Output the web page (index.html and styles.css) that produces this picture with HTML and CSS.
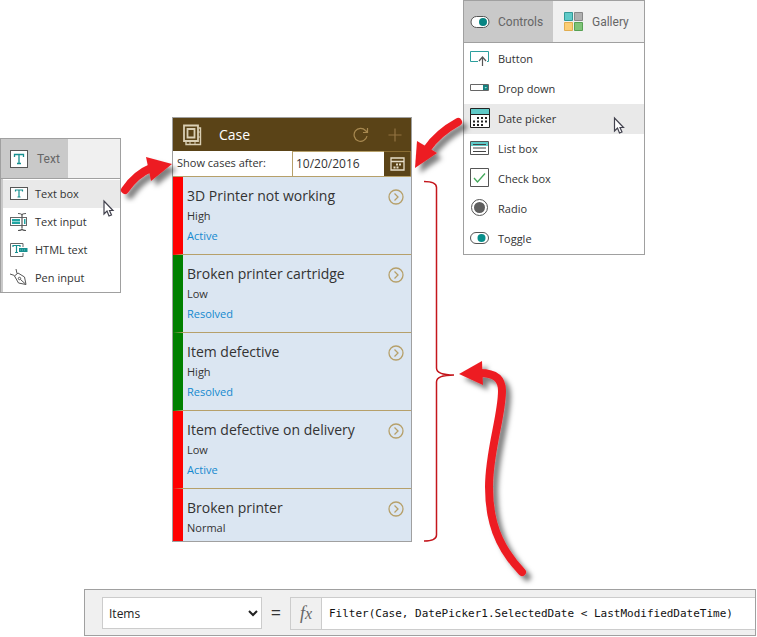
FILE: index.html
```html
<!DOCTYPE html>
<html lang="en">
<head>
<meta charset="utf-8">
<title>Filter cases by date</title>
<link rel="stylesheet" href="styles.css">
</head>
<body>
<main class="diagram">
  <div class="stage">
    <section class="panel text-panel" aria-label="Text controls">
      <div class="tabs">
        <button class="tab selected" type="button">
          <svg width="20" height="20" viewBox="0 0 20 20"><rect x="1.500" y="1.500" width="17" height="17" fill="#fff" stroke="#555"/><path d="M5.500 8V5.500h9V8M10 5.500v9M8 14.500h4" fill="none" stroke="#168f8f" stroke-width="1.300"/></svg>
          Text
        </button>
      </div>
      <div class="menu">
        <button class="item active" type="button">
          <svg width="20" height="20" viewBox="0 0 20 20"><rect x="1.500" y="3.500" width="17" height="12" fill="#fff" stroke="#555"/><path d="M6.500 7.500V6h7v1.500M10 6v7M8.500 13h3" fill="none" stroke="#168f8f" stroke-width="1.200"/></svg>
          Text box
        </button>
        <button class="item" type="button">
          <svg width="20" height="20" viewBox="0 0 20 20"><rect x="1.500" y="5.500" width="16" height="8" fill="#fff" stroke="#666"/><path d="M3 7h8v5H3zM15 7h1.500v5H15z" fill="#21a5a3"/><path d="M3 9.500h8" stroke="#8ed6d3"/><path d="M9 1.500q4 0 4 2q0-2 4-2M13 3v13M9 18.500q4 0 4-2q0 2 4 2" fill="none" stroke="#555" stroke-width="1.200"/></svg>
          Text input
        </button>
        <button class="item" type="button">
          <svg width="20" height="20" viewBox="0 0 20 20"><path d="M14 7V3.500H1.500v13H14V13" fill="none" stroke="#666"/><path d="M4 7V5.500h7V7M7.500 5.500v7M6 12.500h3" fill="none" stroke="#168f8f" stroke-width="1.200"/><path d="M10 8h8.500v4H10z" fill="#168f8f"/><path d="M11 10h6" stroke="#65c6c1" stroke-dasharray="1 1"/></svg>
          HTML text
        </button>
        <button class="item" type="button">
          <svg width="20" height="20" viewBox="0 0 20 20" fill="none" stroke="#555"><path d="M1 6l4.500 1.500M7 1l1 4.500M5.500 8L9 5l6.500 4 1.500 7.500-7.500-1.500L5.500 8zM16.500 16l-5-4.500"/><circle cx="10.500" cy="10.500" r="1.200"/></svg>
          Pen input
        </button>
      </div>
    </section>

    <section class="phone" aria-label="Case app">
      <header class="app-bar">
        <svg width="20" height="22" viewBox="0 0 20 22" fill="none" stroke="#d9cfb4"><path d="M2 1.500h14v15.500H2zM5.500 5h7v8.500h-7z" stroke-width="1.800"/><path d="M4 18v2.500h14.500V4H17" stroke-width="1.400"/><path d="M18 8H16M18 13h-2M8 20v-2M13 20v-2"/></svg>
        <h1>Case</h1>
        <button type="button" aria-label="Refresh"><svg width="16" height="16" viewBox="0 0 16 16" fill="none" stroke="#a88950" stroke-width="1.200"><path d="M14 9A6.500 6.500 0 1 1 12.500 3.500L14 5M14.500 1v4.500H10"/></svg></button>
        <button type="button" aria-label="Add"><svg width="14" height="14" viewBox="0 0 14 14"><path d="M7 .5v13M.5 7h13" stroke="#927341" stroke-width="1.200"/></svg></button>
      </header>
      <div class="date-row">
        <label for="date">Show cases after:</label>
        <input id="date" type="text" value="10/20/2016">
        <button type="button" aria-label="Choose date"><svg width="15" height="14" viewBox="0 0 15 14" fill="none" stroke="#e6dec9"><path d="M1 1h13v12H1zM1 4.500h13" stroke-width="1.300"/><path d="M6 7.500h6M3.500 10.500h6" stroke-width="2" stroke-dasharray="2 1"/></svg></button>
      </div>
      <ul class="cases">
        <li class="case open">
          <div><h2>3D Printer not working</h2><p>High</p><p class="status">Active</p></div>
          <button type="button" aria-label="Open case"><svg width="16" height="16" viewBox="0 0 16 16" fill="none" stroke="#b6a06a"><circle cx="8" cy="8" r="7" stroke-width="1.300"/><path d="M6.500 4.500L10 8l-3.500 3.500" stroke-width="1.300"/></svg></button>
        </li>
        <li class="case resolved">
          <div><h2>Broken printer cartridge</h2><p>Low</p><p class="status">Resolved</p></div>
          <button type="button" aria-label="Open case"><svg width="16" height="16" viewBox="0 0 16 16" fill="none" stroke="#b6a06a"><circle cx="8" cy="8" r="7" stroke-width="1.300"/><path d="M6.500 4.500L10 8l-3.500 3.500" stroke-width="1.300"/></svg></button>
        </li>
        <li class="case resolved">
          <div><h2>Item defective</h2><p>High</p><p class="status">Resolved</p></div>
          <button type="button" aria-label="Open case"><svg width="16" height="16" viewBox="0 0 16 16" fill="none" stroke="#b6a06a"><circle cx="8" cy="8" r="7" stroke-width="1.300"/><path d="M6.500 4.500L10 8l-3.500 3.500" stroke-width="1.300"/></svg></button>
        </li>
        <li class="case open">
          <div><h2>Item defective on delivery</h2><p>Low</p><p class="status">Active</p></div>
          <button type="button" aria-label="Open case"><svg width="16" height="16" viewBox="0 0 16 16" fill="none" stroke="#b6a06a"><circle cx="8" cy="8" r="7" stroke-width="1.300"/><path d="M6.500 4.500L10 8l-3.500 3.500" stroke-width="1.300"/></svg></button>
        </li>
        <li class="case open">
          <div><h2>Broken printer</h2><p>Normal</p></div>
          <button type="button" aria-label="Open case"><svg width="16" height="16" viewBox="0 0 16 16" fill="none" stroke="#b6a06a"><circle cx="8" cy="8" r="7" stroke-width="1.300"/><path d="M6.500 4.500L10 8l-3.500 3.500" stroke-width="1.300"/></svg></button>
        </li>
      </ul>
    </section>

    <section class="panel controls-panel" aria-label="Controls">
      <div class="tabs">
        <button class="tab selected" type="button">
          <svg width="20" height="20" viewBox="0 0 20 20"><rect x="1" y="4.500" width="18" height="11" rx="5.500" fill="#fff" stroke="#555"/><circle cx="13" cy="10" r="4" fill="#078583"/></svg>
          Controls
        </button>
        <button class="tab" type="button">
          <svg width="20" height="20" viewBox="0 0 20 20"><path d="M.5 .5h8v8h-8z" fill="#5fcac8" stroke="#329996"/><path d="M10.500 .5h8v8h-8z" fill="#b0b0b0" stroke="#888"/><path d="M.5 10.500h8v8h-8z" fill="#fccd74" stroke="#e1ad50"/><path d="M10.500 10.500h8v8h-8z" fill="#7fc478" stroke="#57a153"/></svg>
          Gallery
        </button>
      </div>
      <div class="menu">
        <button class="item" type="button">
          <svg width="20" height="22" viewBox="0 0 20 22" fill="none"><path d="M8 13.500H.5v-10h18v10H17" stroke="#2c9e9d"/><path d="M12.500 18V9.500M9 13l3.500-4 3.500 4" stroke="#555" stroke-width="1.200"/></svg>
          Button
        </button>
        <button class="item" type="button">
          <svg width="20" height="22" viewBox="0 0 20 22"><path d="M.5 6.500h18v6H.5z" fill="#fff" stroke="#666"/><path d="M13 7h5v5h-5z" fill="#168180"/><path d="M14.500 9h2.500l-1.250 1.500z" fill="#aee2df"/></svg>
          Drop down
        </button>
        <button class="item active" type="button">
          <svg width="20" height="22" viewBox="0 0 20 22"><path d="M.5 .5h19v19H.5z" fill="#fff" stroke="#222"/><path d="M1 1h18v5H1z" fill="#5fcac8"/><path d="M0 6.500h20" stroke="#222"/><path d="M7 10h10M3 13.500h14M3 17h10" stroke="#222" stroke-width="2" stroke-dasharray="2 2"/></svg>
          Date picker
        </button>
        <button class="item" type="button">
          <svg width="20" height="22" viewBox="0 0 20 22"><path d="M.5 3.500h18v13H.5z" fill="#fff" stroke="#555"/><path d="M1 4h17v4H1z" fill="#5fcac8"/><path d="M3 6.500h13M3 10h13M3 13.500h13" stroke="#444"/></svg>
          List box
        </button>
        <button class="item" type="button">
          <svg width="20" height="22" viewBox="0 0 20 22" fill="none"><path d="M.5 .5h18v18H.5z" fill="#fff" stroke="#555"/><path d="M4 10l3.500 4L15 5.500" stroke="#42a85a" stroke-width="1.300"/></svg>
          Check box
        </button>
        <button class="item" type="button">
          <svg width="20" height="22" viewBox="0 0 20 22"><circle cx="9.500" cy="9.500" r="8" fill="#fff" stroke="#555"/><circle cx="9.500" cy="9.500" r="5.500" fill="#5e5e5e"/></svg>
          Radio
        </button>
        <button class="item" type="button">
          <svg width="20" height="22" viewBox="0 0 20 22"><rect x=".5" y="4.500" width="18" height="11" rx="5.500" fill="#fff" stroke="#555"/><circle cx="11.500" cy="10" r="4" fill="#078f8b"/></svg>
          Toggle
        </button>
      </div>
    </section>
  </div>

  <form class="formula-bar">
    <select aria-label="Property"><option>Items</option></select>
    <span class="equals">=</span>
    <div class="formula">
      <label for="formula"><i>f</i><i class="x">x</i></label>
      <input id="formula" type="text" value="Filter(Case, DatePicker1.SelectedDate &lt; LastModifiedDateTime)">
    </div>
  </form>

  <svg class="annotations" width="757" height="637" viewBox="0 0 757 637" aria-hidden="true">
    <defs>
      <filter id="shadow" x="-30%" y="-30%" width="170%" height="170%"><feDropShadow dx="5" dy="5" stdDeviation="2.500" flood-color="#000" flood-opacity=".5"/></filter>
    </defs>
    <g fill="none" stroke="#c4161c" stroke-width="1.500">
      <path d="M424 181.500q12.500 0 12.500 6V368q0 7 17.500 7q-17.500 0-17.500 7V535q0 6-12.500 6"/>
    </g>
    <g filter="url(#shadow)">
      <path d="M125 190Q136 174 151 168" fill="none" stroke="#ed1c24" stroke-width="8" stroke-linecap="round"/>
      <path d="M172 164L146 157l5 24z" fill="#ed1c24"/>
    </g>
    <g filter="url(#shadow)">
      <path d="M458 122Q438 133 427 149" fill="none" stroke="#ed1c24" stroke-width="8" stroke-linecap="round"/>
      <path d="M415 168L417 141l20 12z" fill="#ed1c24"/>
    </g>
    <g filter="url(#shadow)">
      <path d="M522 572C497 546 489 519 489 487C489 451 502 416 502 391C502 379 495 373 480 373" fill="none" stroke="#ed1c24" stroke-width="8" stroke-linecap="round"/>
      <path d="M459 374L482 361l1 24z" fill="#ed1c24"/>
    </g>
    <g fill="#fff" stroke="#42424e" stroke-width="1.200">
      <path d="M104 201v13l3-3 2 5 2.500-1-2-4.500h3.500z"/>
      <path d="M614.500 118v13l3-3 2 5 2.500-1-2-4.500h3.500z"/>
    </g>
  </svg>
</main>
</body>
</html>
```

FILE: styles.css
```css
* { box-sizing: border-box; }

body {
  margin: 0;
  background: #fff;
  color: #333;
  font: 12px/16px "Open Sans", "Noto Sans", sans-serif;
}

button, input, select { font: inherit; color: inherit; border-radius: 0; }

button {
  display: flex;
  align-items: center;
  margin: 0;
  padding: 0;
  border: 0;
  background: none;
}

svg { flex: none; display: block; }
h1, h2, p, ul { margin: 0; padding: 0; font-weight: 400; }

.diagram { position: relative; }

.stage {
  display: grid;
  grid-template-columns: 121px 240px 182px;
  column-gap: 51px;
  align-items: start;
}

/* Ribbon menus */
.panel { border: 1px solid #a0a0a0; background: #fff; }
.tabs { display: flex; background: #f0f0f0; border-bottom: 1px solid #a0a0a0; }
.tab {
  gap: 8px;
  height: 41px;
  padding: 0 8px;
  color: #666;
  font: 12px/16px Roboto, "Open Sans", sans-serif;
}
.tab.selected { background: #c9c9c9; }
.item { width: 100%; height: 30px; gap: 8px; padding-left: 6px; font-size: 11px; }
.item.active { background: #e9e9e9; }
.menu { padding-top: 1px; }

.text-panel { margin-top: 138px; }
.text-panel .tab { height: 39px; }
.text-panel .menu { border-left: 2px solid #c9c9c9; }
.text-panel .item { height: 28px; gap: 6px; }

.controls-panel .tab { width: 89px; padding-left: 6px; }
.controls-panel .tab + .tab { padding-left: 11px; }

/* Case app */
.phone {
  margin-top: 117px;
  border: 1px solid #a0a0a0;
  background: #dbe6f2;
}

.app-bar {
  display: flex;
  align-items: center;
  height: 33px;
  padding: 0 9px;
  background: #5a4317;
  color: #fff;
}
.app-bar h1 { flex: 1; margin-left: 17px; font-size: 14px; line-height: 20px; }
.app-bar button + button { margin-left: 19px; }

.date-row { display: flex; height: 26px; background: #fff; border-bottom: 1px solid #b6a06a; }
.date-row label { flex: 1; padding-left: 4px; font-size: 11px; line-height: 24px; }
.date-row input {
  width: 92px;
  padding: 0 3px;
  border: 1px solid #b6a06a;
  border-width: 1px 0 0 1px;
  font-size: 12px;
}
.date-row button {
  justify-content: center;
  width: 27px;
  border: 1px solid #8a6d33;
  border-width: 1px 1px 0 0;
  background: #5a4317;
}

.cases { list-style: none; }
.case {
  position: relative;
  display: flex;
  align-items: flex-start;
  justify-content: space-between;
  height: 78px;
  padding: 9px 7px 0 4px;
  border-left: 10px solid red;
}
.case.resolved { border-left-color: green; }
.case:not(:last-child) { border-bottom: 1px solid #b6a06a; }
.case:last-child { height: 52px; }
.case h2 { font-size: 14px; line-height: 20px; }
.case p { font-size: 11px; line-height: 20px; }
.case .status { color: #1489cf; }
.case button { margin-top: 3px; }

/* Formula bar */
.formula-bar {
  display: flex;
  align-items: flex-start;
  margin: 47px 1px 0 84px;
  padding: 7px 0 5px 17px;
  border: 1px solid #a0a0a0;
  background: #f0f0f0;
}
.formula-bar select {
  width: 160px;
  height: 32px;
  padding: 0 0 0 2px;
  border: 1px solid #ccc;
  background: #fff;
  color: #222;
}
.equals { width: 28px; font-size: 18px; line-height: 30px; text-align: center; }
.formula { display: flex; flex: 1; border: 1px solid #ccc; border-right: 0; }
.formula label {
  width: 31px;
  border-right: 1px solid #ccc;
  color: #666;
  font: 18px/30px "Liberation Serif", serif;
  text-align: center;
}
.formula .x { font-size: 16px; }
.formula input {
  flex: 1;
  min-width: 0;
  height: 31px;
  padding: 0 7px;
  border: 0;
  background: #fff;
  color: #111;
  font: 11px "DejaVu Sans Mono", "Liberation Mono", monospace;
}

/* Arrows, bracket and pointers drawn over the screens */
.annotations { position: absolute; top: 0; left: 0; pointer-events: none; }
```
